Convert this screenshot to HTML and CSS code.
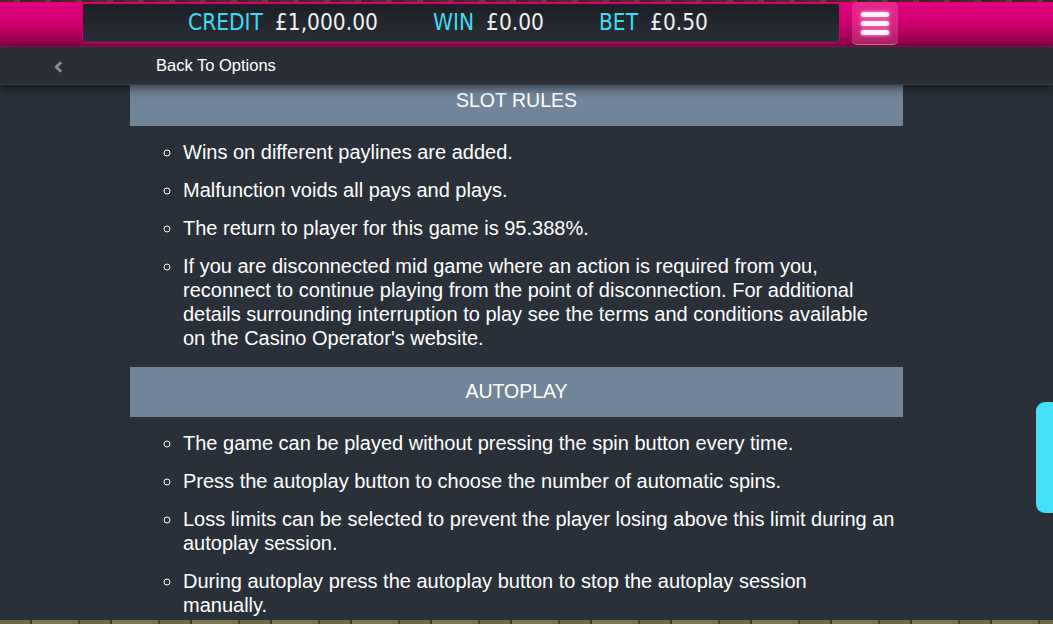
FILE: index.html
```html
<!DOCTYPE html>
<html lang="en">
<head>
<meta charset="utf-8">
<title>Slot Rules</title>
<link rel="stylesheet" href="styles.css">
</head>
<body>
<div class="topstrip"></div>
<header class="header">
  <div class="meter">
    <span class="grp"><span class="lbl">CREDIT</span><span class="val">£1,000.00</span></span>
    <span class="grp"><span class="lbl">WIN</span><span class="val">£0.00</span></span>
    <span class="grp"><span class="lbl">BET</span><span class="val">£0.50</span></span>
  </div>
  <div class="menu"><span class="bar"></span><span class="bar"></span><span class="bar"></span></div>
</header>
<nav class="nav">
  <svg class="chev" width="10" height="12" viewBox="0 0 10 12"><polyline points="7.5,2 3,6 7.5,10" fill="none" stroke="#8d9095" stroke-width="2.6" stroke-linecap="round" stroke-linejoin="round"/></svg>
  <span class="back">Back To Options</span>
</nav>
<div class="content">
  <main class="scroll">
    <div class="doc">
      <h2 class="sec">SLOT RULES</h2>
      <ul class="rules">
        <li>Wins on different paylines are added.</li>
        <li>Malfunction voids all pays and plays.</li>
        <li>The return to player for this game is 95.388%.</li>
        <li>If you are disconnected mid game where an action is required from you, reconnect to continue playing from the point of disconnection. For additional details surrounding interruption to play see the terms and conditions available on the Casino Operator's website.</li>
      </ul>
      <h2 class="sec">AUTOPLAY</h2>
      <ul class="rules">
        <li>The game can be played without pressing the spin button every time.</li>
        <li>Press the autoplay button to choose the number of automatic spins.</li>
        <li>Loss limits can be selected to prevent the player losing above this limit during an autoplay session.</li>
        <li>During autoplay press the autoplay button to stop the autoplay session manually.</li>
      </ul>
    </div>
  </main>
  <div class="track"><div class="thumb"></div></div>
</div>
<div class="bottomstrip"></div>
</body>
</html>
```
FILE: styles.css
```css
html, body {
  margin: 0;
  padding: 0;
}
body {
  width: 1053px;
  height: 624px;
  overflow: hidden;
  background: #293039;
  font-family: "Liberation Sans", Arial, sans-serif;
  color: #fff;
  display: flex;
  flex-direction: column;
}
.topstrip {
  height: 2px;
  background: repeating-linear-gradient(90deg, #4a2a2c 0 14px, #6b3a36 14px 20px, #3d2326 20px 31px);
}
.header {
  height: 44px;
  display: flex;
  align-items: flex-start;
  padding-left: 82px;
  background: linear-gradient(#e2007b 0%, #d10072 45%, #8e0048 100%);
}
.meter {
  box-sizing: border-box;
  width: 758px;
  height: 40px;
  margin-top: 1px;
  border: 1px solid #d40070;
  border-radius: 3px;
  background: linear-gradient(#1c1f25, #2a2f38);
  display: flex;
  align-items: center;
  gap: 55px;
  padding-left: 105px;
  padding-bottom: 2px;
  font-family: "DejaVu Sans Condensed", "DejaVu Sans", sans-serif;
  font-size: 22.5px;
}
.lbl {
  color: #3fdcf2;
  margin-right: 12px;
}
.val {
  color: #f1f1f1;
}
.menu {
  box-sizing: border-box;
  width: 46px;
  height: 43px;
  margin-left: 12px;
  border-radius: 5px;
  background: rgba(255, 170, 210, 0.22);
  border-bottom: 1px solid rgba(255, 200, 225, 0.55);
  display: flex;
  flex-direction: column;
  align-items: center;
  padding-top: 10px;
  gap: 4px;
}
.bar {
  width: 28px;
  height: 5px;
  border-radius: 3px;
  background: #fff2f8;
  box-shadow: 0 0 3px 1px #ff7ab8;
}
.nav {
  height: 37px;
  border-top: 1px solid #6c1a40;
  border-bottom: 1px solid #3a4049;
  background: #2a2f37;
  display: flex;
  align-items: center;
  position: relative;
  z-index: 2;
  box-shadow: 0 3px 9px rgba(0, 0, 0, 0.55);
}
.chev {
  margin-left: 53px;
  margin-top: 2px;
}
.back {
  margin-left: 93px;
  font-size: 16.5px;
  color: #fff;
}
.content {
  height: 535px;
  display: flex;
  overflow: hidden;
}
.scroll {
  flex: 1;
  overflow: hidden;
}
.doc {
  width: 773px;
  margin: -9px auto 0;
}
.sec {
  margin: 0;
  height: 50px;
  line-height: 49px;
  background: #708599;
  text-align: center;
  font-weight: normal;
  font-size: 19.5px;
  color: #fff;
}
.rules {
  margin: 0;
  padding: 14px 8px 3px 53px;
  list-style: circle;
  font-size: 20px;
  line-height: 24px;
}
.rules li {
  margin-bottom: 14px;
}
.track {
  width: 20px;
}
.thumb {
  margin-top: 317px;
  margin-left: 3px;
  width: 24px;
  height: 111px;
  border-radius: 9px;
  background: #45e1fb;
}
.bottomstrip {
  height: 4px;
  background: repeating-linear-gradient(90deg, #6f6b46 0 30px, #3c3a2a 30px 32px, #7b7650 32px 78px, #45432f 78px 80px);
}
```
